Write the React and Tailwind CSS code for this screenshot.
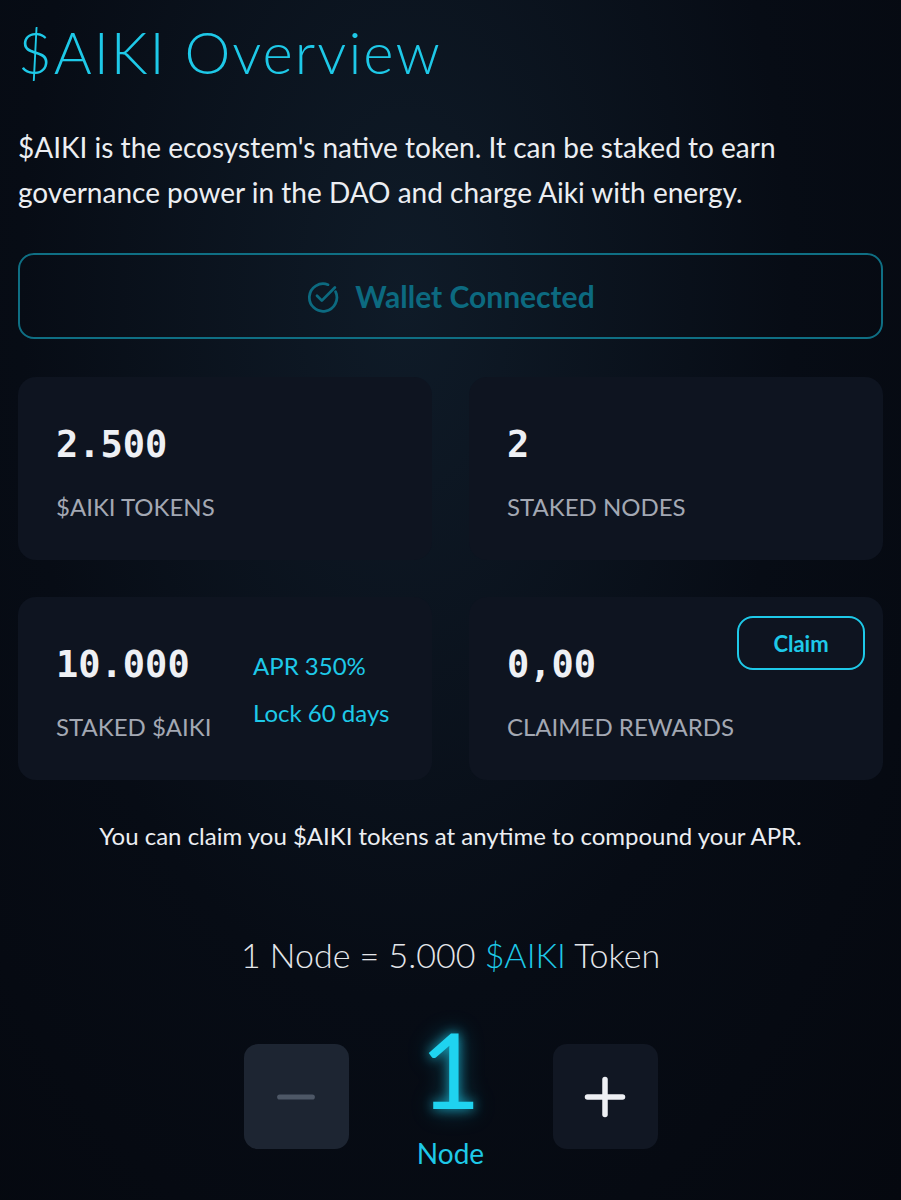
import { Minus, Plus } from "lucide-react";

const StatCard = ({ value, label, children }) => (
  <div className="relative h-[183px] rounded-[18px] bg-[#0e1420] px-[38px] pt-[47px]">
    <p className="font-['DejaVu_Sans_Mono',monospace] text-[37px] font-bold leading-[42px] text-[#eef0f4]">{value}</p>
    <p className="mt-[26px] text-[24px] leading-[30px] text-[#a3a8b3]">{label}</p>
    {children}
  </div>
);

const CheckCircle = () => (
  <svg width="33" height="33" viewBox="0 0 24 24" fill="none" stroke="currentColor" strokeWidth="2" strokeLinecap="round" strokeLinejoin="round">
    <path d="M21.5 8.5A10 10 0 1 1 16 3.4" />
    <path d="M8 11.5l3.5 3.5L21 5.5" />
  </svg>
);

export default function App() {
  return (
    <div className="min-h-[1200px] w-[901px] bg-[radial-gradient(ellipse_at_45%_25%,#0f1b28_0%,#070c15_55%,#05080f_100%)] font-['Lato','Noto_Sans',sans-serif] text-white">
      <div className="px-[18px] pt-[20px]">
        <h1 className="text-[58px] font-light leading-[64px] tracking-[2px] text-[#1ec9e8]">$AIKI Overview</h1>
        <p className="mt-[41px] max-w-[790px] text-[28px] leading-[45px] text-[#eceef2]">
          $AIKI is the ecosystem's native token. It can be staked to earn governance power in the DAO and charge Aiki with energy.
        </p>

        <button className="mt-[38px] flex h-[86px] w-full items-center justify-center gap-[16px] rounded-[16px] border-2 border-[#0f6f84] text-[#0c6a80]">
          <CheckCircle />
          <span className="text-[30px] font-bold">Wallet Connected</span>
        </button>

        <div className="mt-[38px] grid grid-cols-2 gap-x-[37px] gap-y-[37px]">
          <StatCard value="2.500" label="$AIKI TOKENS" />
          <StatCard value="2" label="STAKED NODES" />
          <StatCard value="10.000" label="STAKED $AIKI">
            <div className="absolute left-[235px] top-[45px] text-[24px] leading-[47px] text-[#1ec9e8]">
              <p>APR 350%</p>
              <p>Lock 60 days</p>
            </div>
          </StatCard>
          <StatCard value="0,00" label="CLAIMED REWARDS">
            <button className="absolute right-[18px] top-[19px] h-[54px] w-[128px] rounded-[16px] border-2 border-[#1ec9e8] text-[22px] font-bold text-[#1ec9e8]">
              Claim
            </button>
          </StatCard>
        </div>

        <p className="mt-[41px] text-center text-[24px] leading-[30px] text-[#eceef2]">
          You can claim you $AIKI tokens at anytime to compound your APR.
        </p>

        <p className="mt-[82px] text-center text-[34px] font-light leading-[44px] text-[#e4e6ea]">
          1 Node = 5.000 <span className="text-[#1ec9e8]">$AIKI</span> Token
        </p>

        <div className="mt-[40px] flex items-start justify-center gap-[62px]">
          <button className="mt-[27px] flex h-[105px] w-[105px] items-center justify-center rounded-[14px] bg-[#1d2532] text-[#4d5766]">
            <Minus size={56} strokeWidth={2.2} />
          </button>
          <div className="flex w-[80px] flex-col items-center">
            <span className="text-[104px] font-normal leading-[104px] text-[#1fd3f0] [text-shadow:0_0_12px_rgba(30,201,232,0.8),0_0_24px_rgba(30,201,232,0.4)]">1</span>
            <span className="mt-[15px] text-[28px] leading-[34px] text-[#1ec9e8]">Node</span>
          </div>
          <button className="mt-[27px] flex h-[105px] w-[105px] items-center justify-center rounded-[14px] bg-[#111723] text-[#eef0f4]">
            <Plus size={60} strokeWidth={2.2} />
          </button>
        </div>
      </div>
    </div>
  );
}
